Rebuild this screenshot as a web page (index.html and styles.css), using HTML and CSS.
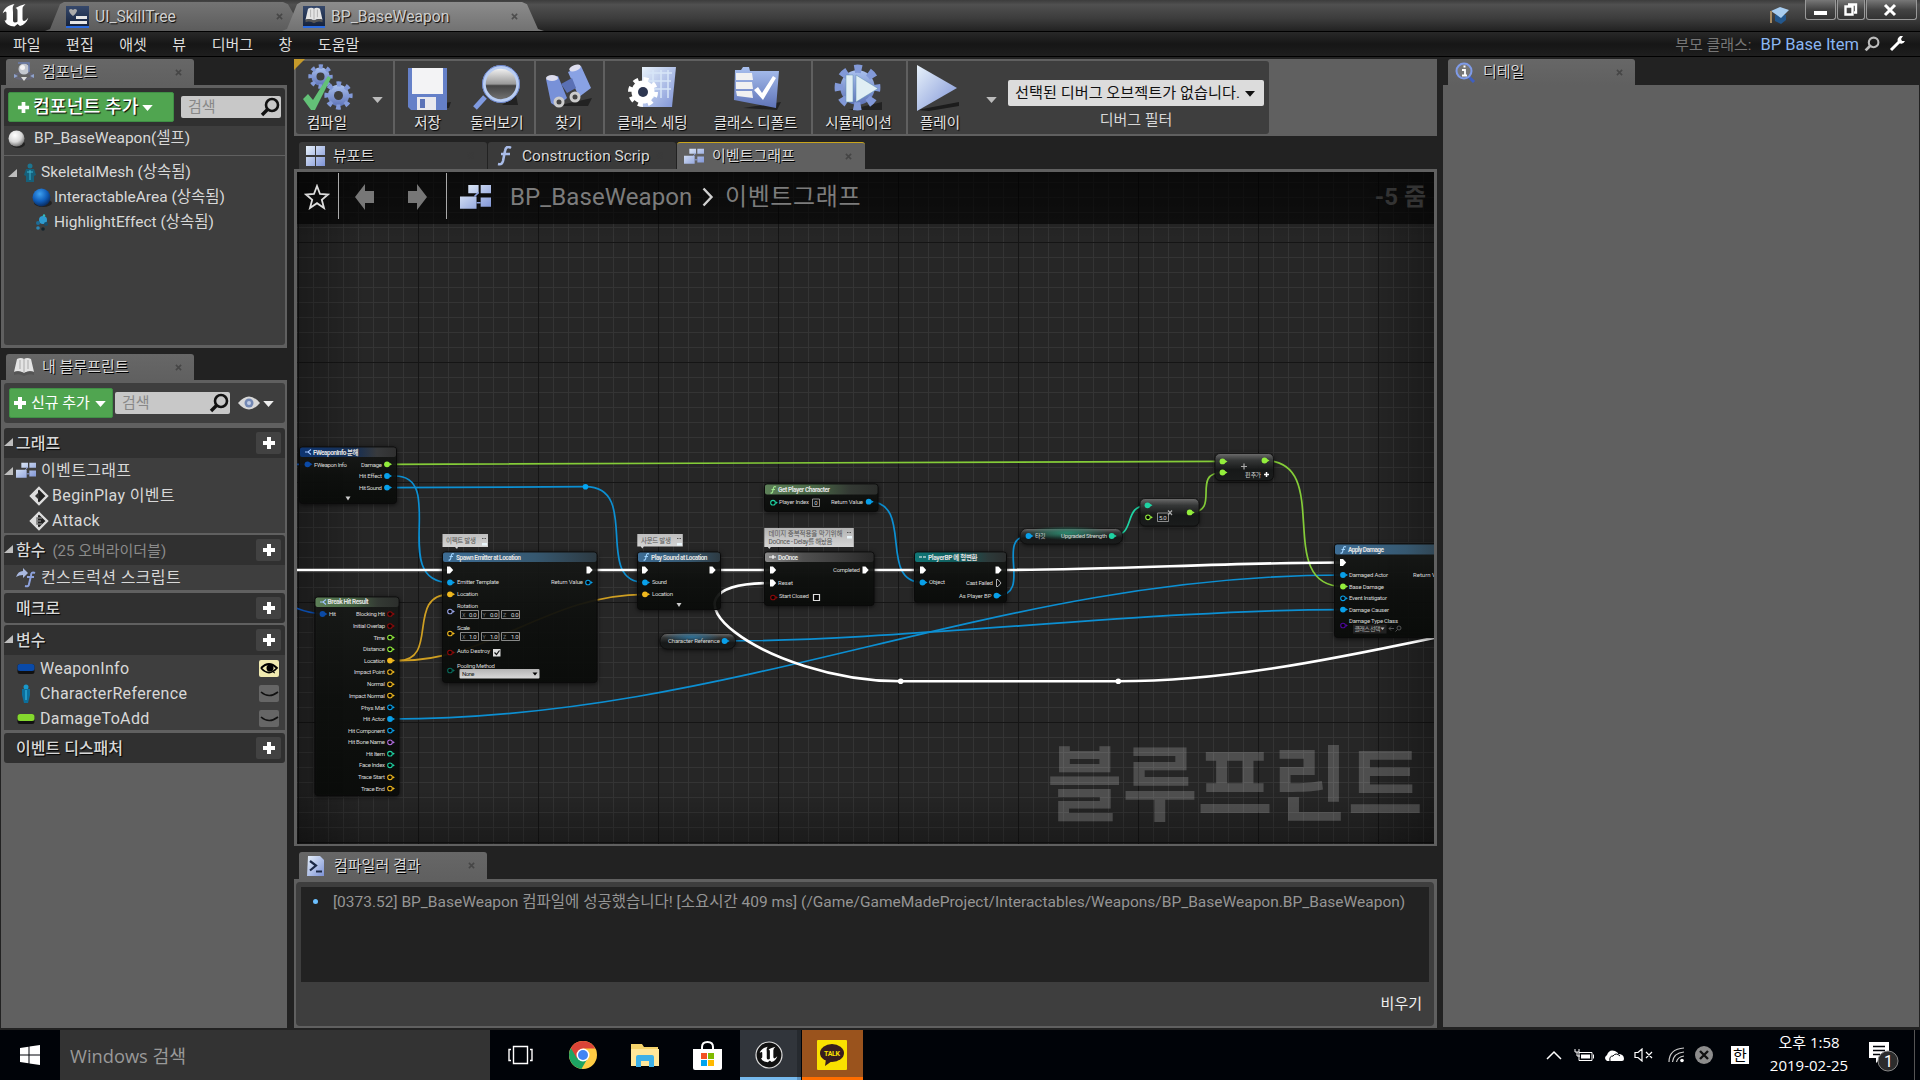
FILE: index.html
```html
<!DOCTYPE html>
<html lang="ko">
<head>
<meta charset="utf-8">
<title>BP_BaseWeapon</title>
<link rel="stylesheet" href="styles.css">
</head>
<body>
<svg class="defs" width="0" height="0" aria-hidden="true">
  <defs>
    <linearGradient id="ice" x1="0" y1="0" x2="1" y2="1"><stop offset="0" stop-color="#e8f2fb"/><stop offset="1" stop-color="#7e93d6"/></linearGradient>
    <linearGradient id="blu" x1="0" y1="0" x2="0" y2="1"><stop offset="0" stop-color="#a9c0ee"/><stop offset="1" stop-color="#5f74b8"/></linearGradient>
    <linearGradient id="deep" x1="0" y1="0" x2="0" y2="1"><stop offset="0" stop-color="#35486b"/><stop offset="1" stop-color="#16233d"/></linearGradient>
    <radialGradient id="ball" cx=".4" cy=".3" r=".7"><stop offset="0" stop-color="#fff"/><stop offset=".6" stop-color="#d8d8d8"/><stop offset="1" stop-color="#777"/></radialGradient>
    <radialGradient id="blueball" cx=".4" cy=".3" r=".7"><stop offset="0" stop-color="#3ea0f0"/><stop offset=".6" stop-color="#0f5cb8"/><stop offset="1" stop-color="#0a2c60"/></radialGradient>
    <linearGradient id="lens" x1="0" y1="0" x2="0" y2="1"><stop offset="0" stop-color="#fafafa"/><stop offset=".5" stop-color="#999"/><stop offset=".55" stop-color="#444"/><stop offset="1" stop-color="#777"/></linearGradient>
    <symbol id="i-x" viewBox="0 0 8 8"><path d="M1 1l6 6M7 1l-6 6" stroke="#3a3a3a" stroke-width="1.8"/></symbol>
    <symbol id="i-search" viewBox="0 0 20 20"><circle cx="12" cy="8" r="6" fill="none" stroke="currentColor" stroke-width="2.6"/><path d="M7.5 12.5L2 18" stroke="currentColor" stroke-width="3.4"/></symbol>
    <symbol id="i-plus" viewBox="0 0 14 14"><path d="M5 1h4v4h4v4h-4v4h-4v-4h-4v-4h4z" fill="#fff"/></symbol>
    <symbol id="i-down" viewBox="0 0 12 8"><path d="M0 1h12l-6 7z" fill="currentColor"/></symbol>
    <symbol id="i-exp" viewBox="0 0 10 10"><path d="M9 1v8h-9z" fill="#bdbdbd"/></symbol>
    <symbol id="i-graph" viewBox="0 0 30 24"><path d="M8 0h10v8h-10zM20 0h10v8h-10zM0 11h16v12h-16zM20 12h10v9h-10z" fill="url(#ice)"/><path d="M14 11l4-4M16 17h4" stroke="#8ea2dc" stroke-width="1.5"/></symbol>
    <symbol id="i-book" viewBox="0 0 22 20"><path d="M4 2q4-2 7 0q3-2 7 0l3 13q-5-2-10 1q-5-3-10-1z" fill="#e4e4e4"/><path d="M11 2v13M7 3v9M15 3v9" stroke="#aaa"/><path d="M1 15q5-2 10 1q5-3 10-1v3q-5-2-10 1q-5-3-10-1z" fill="#555"/></symbol>
    <symbol id="i-gear" viewBox="-12 -12 24 24"><circle r="8.800" fill="url(#blu)"/><circle r="9.600" fill="none" stroke="#8299d8" stroke-width="4.200" stroke-dasharray="3.770" stroke-dashoffset="1.885"/></symbol>
    <symbol id="i-ue" viewBox="0 0 26 24"><path d="M0 9.500C2 4 6 1 12 0C9.500 2.500 10.500 5 10.500 8v8.500q0 2 1.800 2t2.700-1V6.500q0-2.500-2-2.500q4-2.500 10-4q-3 2.500-3 5v10q0 2 1.500 2t4.500-3.500q-2.500 7-8.500 8.500l-2.500-2-3 2.500q-8-.5-10-6q2 .5 2-1.500V9q0-1.500-1-1.500t-3 2z" fill="currentColor"/></symbol>
    <g id="p-f"><circle r="2.900" fill="currentColor"/><path d="M2.500-1.500l2.500 1.500-2.500 1.500z" fill="currentColor"/></g>
    <g id="p-h"><circle r="2.300" fill="#050505" stroke="currentColor" stroke-width="1.100"/><path d="M2.700-1.400l2.200 1.400-2.200 1.400z" fill="currentColor"/></g>
    <g id="p-e"><path d="M-3-3.500h3l3.200 3.500-3.200 3.500h-3z" fill="#fff"/></g>
  </defs>
</svg>

<header class="titlebar">
  <svg class="ue" viewBox="0 0 26 24"><use href="#i-ue"/></svg>
  <div class="wintab first">
    <svg width="23" height="22" viewBox="0 0 23 22"><rect width="23" height="20" fill="url(#deep)"/><rect y="20" width="23" height="2" fill="#2b6be0"/><path d="M3 4q2-2 4 0q2-2 4 0q0 3-4 6q-4-3-4-6z" fill="#aaa"/><path d="M10 10h11v3h-11zM4 15h17v3h-17z" fill="#e6e6e6"/></svg>
    <span>UI_SkillTree</span><svg class="x" viewBox="0 0 8 8"><use href="#i-x"/></svg>
  </div>
  <div class="wintab on">
    <svg width="22" height="22" viewBox="0 0 22 22"><rect width="22" height="20" fill="url(#deep)"/><rect y="20" width="22" height="2" fill="#2b6be0"/><use href="#i-book" x="1" y="1" width="20" height="17"/></svg>
    <span>BP_BaseWeapon</span><svg class="x" viewBox="0 0 8 8"><use href="#i-x"/></svg>
  </div>
  <div class="wincontrols">
    <svg class="cap" width="20" height="19" viewBox="0 0 20 19"><path d="M5 9v6l6 3 5-4v-5z" fill="#23578c"/><path d="M1 5l9-4 9 3-8 8z" fill="#a8cdf0"/><path d="M1 5v12" stroke="#a58a62" stroke-width="2"/></svg>
    <div class="wb w31"><svg width="31" height="20"><path d="M9 11h13v4h-13z" fill="#fff"/></svg></div>
    <div class="wb w28"><svg width="28" height="20"><path d="M8.500 6.500h7v8h-7zM11 4.500h8v8h-2" fill="none" stroke="#fff" stroke-width="2.400"/></svg></div>
    <div class="wb w51"><svg width="51" height="20"><path d="M19 5l10 10M29 5l-10 10" stroke="#fff" stroke-width="3"/></svg></div>
  </div>
</header>

<nav class="menubar">
  <span>파일</span><span>편집</span><span>애셋</span><span>뷰</span><span>디버그</span><span>창</span><span>도움말</span>
  <div class="parent"><span class="dim">부모 클래스:</span><span class="link">BP Base Item</span>
    <svg width="16" height="16" viewBox="0 0 20 20"><use href="#i-search"/></svg>
    <svg class="wrench" width="17" height="16" viewBox="0 0 17 16"><path d="M2 14L10 6" stroke="#fff" stroke-width="3"/><path d="M10 1q-3 3 0 6q4 2 6-2l-3 0-1-2 2-3q-2-1-4 1z" fill="#fff"/></svg>
  </div>
</nav>

<main class="work">
  <aside class="left">
    <div class="tab"><svg width="22" height="20" viewBox="0 0 22 20"><ellipse cx="11" cy="14" rx="9" ry="3" fill="none" stroke="#667" stroke-width="2"/><circle cx="11" cy="7" r="5.500" fill="#c4c8d0"/><circle cx="9.500" cy="5.500" r="2.500" fill="#f4f4f4"/><path d="M5 1h11v9" fill="none" stroke="#6c7fae" stroke-width="1.500"/><path d="M8 15h6l-3 4z" fill="#ddd"/><path d="M1 12l4 2-4 2zM21 12l-4 2 4 2z" fill="#8ea2cc"/></svg><span>컴포넌트</span><svg class="x" viewBox="0 0 8 8"><use href="#i-x"/></svg></div>
    <section class="panel components">
      <div class="comphead">
        <button class="green big"><svg width="13" height="13"><use href="#i-plus"/></svg>컴포넌트 추가<svg class="dn" width="11" height="7"><use href="#i-down"/></svg></button>
        <div class="search"><span>검색</span><svg width="20" height="20"><use href="#i-search"/></svg></div>
      </div>
      <div class="self"><svg width="18" height="19" viewBox="0 0 18 19"><ellipse cx="10" cy="14" rx="7" ry="4" fill="#222"/><circle cx="8.500" cy="8.500" r="8" fill="url(#ball)"/></svg>BP_BaseWeapon(셀프)</div>
      <div class="tree">
        <div class="r"><svg class="e" width="10" height="10"><use href="#i-exp"/></svg><svg width="14" height="20" viewBox="0 0 14 20"><circle cx="7" cy="3" r="2.500" fill="#1d7590"/><path d="M3 6h8l2 6-2 1v6h-8v-6l-2-1z" fill="#16607a"/><path d="M7 7v10M4 9h6" stroke="#3bb2d0"/></svg><span>SkeletalMesh (상속됨)</span></div>
        <div class="r sub"><svg width="20" height="20" viewBox="0 0 20 20"><ellipse cx="11" cy="15" rx="9" ry="4" fill="#222"/><circle cx="9.500" cy="9.500" r="9" fill="url(#blueball)"/></svg><span>InteractableArea (상속됨)</span></div>
        <div class="r sub"><svg width="20" height="18" viewBox="0 0 20 18"><circle cx="11" cy="6" r="4" fill="#2f9bd0"/><circle cx="6" cy="9" r="2" fill="#1d6c96"/><circle cx="14" cy="10" r="2" fill="#174d6c"/><circle cx="6" cy="14" r="1.800" fill="#2b86b4"/><circle cx="11" cy="15" r="1.800" fill="#14232c"/><circle cx="12" cy="1.500" r="1.200" fill="#3bb"/></svg><span>HighlightEffect (상속됨)</span></div>
      </div>
    </section>
    <div class="tab second"><svg width="22" height="20"><use href="#i-book" width="22" height="20"/></svg><span>내 블루프린트</span><svg class="x" viewBox="0 0 8 8"><use href="#i-x"/></svg></div>
    <section class="panel blueprint">
      <div class="bphead">
        <button class="green"><svg width="14" height="14"><use href="#i-plus"/></svg>신규 추가<svg class="dn" width="11" height="7"><use href="#i-down"/></svg></button>
        <div class="search"><span>검색</span><svg width="20" height="20"><use href="#i-search"/></svg></div>
        <svg class="eye" width="22" height="14" viewBox="0 0 22 14"><path d="M0 7q11-13 22 0q-11 13-22 0z" fill="#d8d8d8"/><circle cx="11" cy="7" r="4.500" fill="#7388b4"/><circle cx="11" cy="7" r="2" fill="#c0cce4"/></svg><svg class="w" width="11" height="7"><use href="#i-down"/></svg>
      </div>
      <div class="cat"><svg class="e" width="10" height="10"><use href="#i-exp"/></svg><b>그래프</b><i><svg width="14" height="14"><use href="#i-plus"/></svg></i></div>
      <div class="items">
        <div class="r"><svg class="e" width="10" height="10"><use href="#i-exp"/></svg><svg class="g" width="20" height="17" viewBox="0 0 30 24"><use href="#i-graph"/></svg><span>이벤트그래프</span></div>
        <div class="r in"><svg width="20" height="20" viewBox="0 0 20 20"><path d="M10 2l8 8-8 8-8-8z" fill="#222" stroke="#ddd" stroke-width="2.400"/><path d="M9 2v16l-8-8z" fill="#ddd"/><path d="M10 6v8l-4-4z" fill="#333"/></svg><span>BeginPlay 이벤트</span></div>
        <div class="r in"><svg width="20" height="20" viewBox="0 0 20 20"><path d="M10 2l8 8-8 8-8-8z" fill="#222" stroke="#ddd" stroke-width="2.400"/><path d="M9 2v16l-8-8z" fill="#ddd"/><path d="M13 7h-5v6h5M8 10h4" fill="none" stroke="#777" stroke-width="1.500"/></svg><span>Attack</span></div>
      </div>
      <div class="cat"><svg class="e" width="10" height="10"><use href="#i-exp"/></svg><b>함수</b><small>(25 오버라이더블)</small><i><svg width="14" height="14"><use href="#i-plus"/></svg></i></div>
      <div class="items one"><div class="r fn"><svg width="20" height="20" viewBox="0 0 20 20"><path d="M0 9q2-6 7-6v-3l5 5-5 5v-3q-4 0-7 2z" fill="#a9b9e0"/><path d="M19 5q-4-2-4 3l-2 8q0 3-4 2M11 9h7" fill="none" stroke="#8ea2dc" stroke-width="2"/></svg><span>컨스트럭션 스크립트</span></div></div>
      <div class="cat macro"><b>매크로</b><i><svg width="14" height="14"><use href="#i-plus"/></svg></i></div>
      <div class="cat vars"><svg class="e" width="10" height="10"><use href="#i-exp"/></svg><b>변수</b><i><svg width="14" height="14"><use href="#i-plus"/></svg></i></div>
      <div class="items">
        <div class="r v"><svg width="18" height="12"><rect x=".5" y="1" width="17" height="10" rx="2.500" fill="#111"/><rect x=".5" y="1" width="17" height="7" rx="2.500" fill="#0a4aa8"/></svg><span>WeaponInfo</span><em class="open"><svg width="20" height="17" viewBox="0 0 20 17"><path d="M2 8q8-8 16 0q-8 9-16 0" fill="none" stroke="#000" stroke-width="1.800"/><circle cx="11" cy="8" r="3.500" fill="#000"/><path d="M14 12l2 1" stroke="#000"/></svg></em></div>
        <div class="r v"><svg width="18" height="20" viewBox="0 0 18 20"><circle cx="9" cy="3" r="2.500" fill="#1899cc"/><path d="M5 5h8v6l-2 8h-4l-2-8z" fill="#0c6f9c"/><path d="M9 6v10" stroke="#3bc5f0"/></svg><span>CharacterReference</span><em><svg width="20" height="17" viewBox="0 0 20 17"><path d="M2 7q8 7 17 0" fill="none" stroke="#111" stroke-width="1.600"/></svg></em></div>
        <div class="r v"><svg width="18" height="12"><rect x=".5" y="1" width="17" height="10" rx="2.500" fill="#111"/><rect x=".5" y="1" width="17" height="7" rx="2.500" fill="#84d82e"/></svg><span>DamageToAdd</span><em><svg width="20" height="17" viewBox="0 0 20 17"><path d="M2 7q8 7 17 0" fill="none" stroke="#111" stroke-width="1.600"/></svg></em></div>
      </div>
      <div class="cat macro disp"><b>이벤트 디스패처</b><i><svg width="14" height="14"><use href="#i-plus"/></svg></i></div>
    </section>
  </aside>

  <section class="center">
    <div class="toolbar"><div class="tools"><svg class="corner" width="11" height="11"><path d="M0 0h11L0 11z" fill="#c59a2a"/></svg>
      <div class="tool compile"><svg width="50" height="50" viewBox="0 0 50 50"><use href="#i-gear" x="5" y="0" width="25" height="25"/><circle cx="17.500" cy="12.500" r="4" fill="#3e3e3e"/><use href="#i-gear" x="21" y="17" width="29" height="29"/><circle cx="35.500" cy="31.500" r="4.500" fill="#3e3e3e"/><path d="M0 35l5-5 5 6L25 12l3 2L12 46H8z" fill="#63c177"/></svg><span>컴파일</span></div>
      <svg class="dd" width="11" height="7"><use href="#i-down"/></svg>
      <div class="tool save"><svg width="50" height="50" viewBox="0 0 50 50"><path d="M6 44h40l2-6z" fill="#222"/><path d="M5 4h39v42h-36l-3-3z" fill="#6580c8"/><path d="M9 4h31v26h-31z" fill="#f3f3f5"/><path d="M14 33h19v13h-19z" fill="#e8e8ee"/><path d="M17 35h5v9h-5z" fill="#5a72b8"/></svg><span>저장</span></div>
      <div class="tool browse"><svg width="50" height="50" viewBox="0 0 50 50"><path d="M13 33L3 44" stroke="#7f9ae0" stroke-width="5"/><path d="M30 41h16l-2-10z" fill="#222"/><circle cx="29" cy="20" r="17" fill="url(#lens)" stroke="#b9cdf2" stroke-width="3.500"/><circle cx="29" cy="20" r="18.500" fill="none" stroke="#6a84cc"/></svg><span>둘러보기</span></div>
      <div class="tool find"><svg width="50" height="50" viewBox="0 0 50 50"><path d="M12 42h32l4-8z" fill="#222"/><path d="M2 15l12-3 9 22-10 9-6-4z" fill="#7891d8"/><path d="M24 8l13-6 10 22-12 9z" fill="#89a2e4"/><path d="M17 20l11-6 4 10-9 5z" fill="#5a70b4"/><ellipse cx="8" cy="14" rx="6" ry="3" fill="#dde"/><ellipse cx="31" cy="4" rx="6" ry="3" transform="rotate(-20 31 4)" fill="#dde"/><circle cx="15" cy="38" r="5.500" fill="#ccc"/><circle cx="15" cy="38" r="2.500" fill="#444"/><circle cx="31" cy="33" r="5.500" fill="#ccc"/><circle cx="31" cy="33" r="2.500" fill="#444"/></svg><span>찾기</span></div>
      <div class="tool cset"><svg width="50" height="50" viewBox="0 0 50 50"><path d="M14 3h34l-4 40h-30z" fill="url(#ice)"/><path d="M18 9h26M18 17h25M18 25h25M25 6v28M33 6v28M40 6v28" stroke="#d7e6f8" stroke-width="1.500"/><circle cx="15" cy="28" r="11.500" fill="#fff"/><circle cx="15" cy="28" r="12.500" fill="none" stroke="#fff" stroke-width="5" stroke-dasharray="4.909"/><circle cx="15" cy="28" r="5" fill="#2d3650"/></svg><span>클래스 세팅</span></div>
      <div class="tool cdef"><svg width="50" height="50" viewBox="0 0 50 50"><path d="M12 44l34 2 4-8z" fill="#222"/><path d="M4 6h6l2-3h6l1 4h29l-3 37-42-8z" fill="url(#blu)"/><path d="M5 9h16l1 7h-17zM5 18h16l1 7h-17zM5 27h16l1 7-16-2z" fill="#f1f1f1"/><path d="M23 26l4-3 4 6 11-17 3 2-13 22z" fill="#fff"/></svg><span>클래스 디폴트</span></div>
      <div class="tool sim"><svg width="50" height="50" viewBox="0 0 50 50"><path d="M14 46h34v-8z" fill="#222"/><use href="#i-gear" x="0" y="0" width="47" height="47"/><path d="M12 11h7v27h-7zM22 11l22 13.500-22 13.500z" fill="#e0eef4" stroke="#5b8fb0" stroke-opacity=".5"/></svg><span>시뮬레이션</span></div>
      <div class="tool play"><svg width="50" height="50" viewBox="0 0 50 50"><path d="M5 46l42-8v4l-30 5z" fill="#1c1c1c"/><path d="M5 1l40 23-40 23z" fill="url(#ice)"/></svg><span>플레이</span></div>
      <svg class="dd d2" width="11" height="7"><use href="#i-down"/></svg>
      <div class="filter"><div class="combo"><span>선택된 디버그 오브젝트가 없습니다.</span><svg width="10" height="7"><use href="#i-down"/></svg></div><span>디버그 필터</span></div>
    </div></div>

    <div class="gtabs">
      <div class="gt"><svg width="19" height="20" viewBox="0 0 19 20"><path d="M0 0h9v9h-9zM10 0h9v9h-9zM0 11h9v9h-9zM10 11h9v9h-9z" fill="url(#ice)"/></svg><span>뷰포트</span><svg class="x" viewBox="0 0 8 8"><use href="#i-x"/></svg></div>
      <div class="gt"><svg width="19" height="20" viewBox="0 0 19 20"><path d="M16 2q-5-3-6 3l-2 10q-1 4-5 3M6 8h9" fill="none" stroke="#a9bce8" stroke-width="2.600"/></svg><span class="cs">Construction Scrip</span><svg class="x" viewBox="0 0 8 8"><use href="#i-x"/></svg></div>
      <div class="gt act"><svg width="20" height="17" viewBox="0 0 30 24"><use href="#i-graph"/></svg><span>이벤트그래프</span><svg class="x" viewBox="0 0 8 8"><use href="#i-x"/></svg></div>
    </div>

    <div class="graph">
      <svg class="canvas" width="1137" height="672" viewBox="297 172 1137 672">
        <defs>
          <pattern id="minor" x="298" y="242" width="15" height="15" patternUnits="userSpaceOnUse"><path d="M.5 0v15M0 .5h15" stroke="#343434"/></pattern>
          <pattern id="major" x="298" y="242" width="120" height="120" patternUnits="userSpaceOnUse"><path d="M.5 0v120M0 .5h120" stroke="#151515"/></pattern>
          <linearGradient id="vl"><stop offset="0" stop-opacity=".3"/><stop offset=".06" stop-opacity="0"/><stop offset=".94" stop-opacity="0"/><stop offset="1" stop-opacity=".3"/></linearGradient>
          <linearGradient id="vt" x2="0" y2="1"><stop offset="0" stop-opacity=".3"/><stop offset=".1" stop-opacity="0"/><stop offset=".92" stop-opacity="0"/><stop offset="1" stop-opacity=".3"/></linearGradient>
          <linearGradient id="body" x2="0" y2="1"><stop offset="0" stop-color="#1a1c1a"/><stop offset=".5" stop-color="#0f110f"/><stop offset="1" stop-color="#0a0c0a"/></linearGradient>
          <linearGradient id="hb"><stop offset="0" stop-color="#3d6d95"/><stop offset=".6" stop-color="#365870"/><stop offset="1" stop-color="#2d3a42"/></linearGradient>
          <linearGradient id="hn"><stop offset="0" stop-color="#0e3572"/><stop offset=".6" stop-color="#1a3050"/><stop offset=".8" stop-color="#383a3c"/><stop offset="1" stop-color="#303030"/></linearGradient>
          <linearGradient id="hg"><stop offset="0" stop-color="#5d8058"/><stop offset=".45" stop-color="#486645"/><stop offset=".75" stop-color="#343a34"/><stop offset="1" stop-color="#2c2e2c"/></linearGradient>
          <linearGradient id="hw"><stop offset="0" stop-color="#8a8a8a"/><stop offset=".35" stop-color="#505050"/><stop offset="1" stop-color="#2a2a2a"/></linearGradient>
          <linearGradient id="ht"><stop offset="0" stop-color="#0f7676"/><stop offset=".5" stop-color="#145a5a"/><stop offset=".8" stop-color="#2c3a3a"/><stop offset="1" stop-color="#2c2e2e"/></linearGradient>
          <linearGradient id="pill" x2="0" y2="1"><stop offset="0" stop-color="#777"/><stop offset=".25" stop-color="#3a3c3c"/><stop offset=".6" stop-color="#181a1a"/><stop offset="1" stop-color="#1c1e1e"/></linearGradient>
          <radialGradient id="gt"><stop offset="0" stop-color="#2a9c7c" stop-opacity=".8"/><stop offset="1" stop-color="#2a9c7c" stop-opacity="0"/></radialGradient>
          <radialGradient id="gb"><stop offset="0" stop-color="#2a7cac" stop-opacity=".8"/><stop offset="1" stop-color="#2a7cac" stop-opacity="0"/></radialGradient>
          <linearGradient id="bub" x2="0" y2="1"><stop offset="0" stop-color="#b4b4b4"/><stop offset="1" stop-color="#d8d8d8"/></linearGradient>
        </defs>
        <rect x="297" y="172" width="1137" height="672" fill="#262626"/>
        <rect x="297" y="172" width="1137" height="672" fill="url(#minor)"/>
        <rect x="297" y="172" width="1137" height="672" fill="url(#major)"/>
        <rect x="297" y="172" width="1137" height="672" fill="url(#vl)"/>
        <rect x="297" y="172" width="1137" height="672" fill="url(#vt)"/>
        <text class="mark" x="1047" y="814" textLength="376">블루프린트</text>

        <g class="wires">
          <g class="c-nv"><path d="M296 464.300h11M296 608q12 5 27 6"/></g>
          <g class="c-bl">
            <path d="M387 476h8C448 476 388 582.500 450 582.500"/>
            <path d="M387 487.600L585.500 486.700C642 487 592 582.500 645 582.500"/>
            <path d="M390 719C740 719 993 575 1343 575"/>
            <path d="M724.600 641C900 641 1150 609.600 1343 609.600"/>
            <path d="M868.700 501.700C915 501.700 877 582.500 922.500 582.500"/>
            <path d="M996.500 595.600C1034 595.600 994 536 1028.500 536"/>
          </g>
          <g class="c-ye"><path d="M390 660.600h8C440 660.600 405 594.300 450 594.300"/><path d="M390 660.600h10C490 660.600 548 594.300 645 594.300"/></g>
          <g class="c-te"><path d="M1112 536C1137 536 1122 505.300 1147.500 505.300"/></g>
          <g class="c-gr"><path d="M387 464.300L1222 461.400M1190 512.400C1222 512.400 1190 472.500 1222.500 472.500M1264.500 460.500C1335 460.500 1272 586.500 1343 586.500"/></g>
          <g class="c-wh"><path d="M296 570h153M590 570h55M712 570h60M866 570h56M999 570C1110 570 1230 562.500 1342 562.500"/><path d="M772 583C637 583 765 681.300 900.700 681.300H1118.300C1220 681.300 1320 662 1436 637.500"/></g>
        </g>
        <circle cx="585.500" cy="486.700" r="2.800" fill="#04a6f4"/><circle cx="900.700" cy="681.300" r="2.800" fill="#fff"/><circle cx="1118.300" cy="681.300" r="2.800" fill="#fff"/>

        <g class="box">
          <rect x="299.500" y="447" width="97" height="56.500" rx="3"/><rect x="442.500" y="552" width="154.500" height="130.500" rx="3"/><rect x="315" y="597" width="84" height="198.500" rx="3"/><rect x="637.500" y="552" width="83" height="57.500" rx="3"/><rect x="764.500" y="484" width="113.500" height="27.500" rx="3"/><rect x="764.500" y="552" width="109.500" height="53.500" rx="3"/><rect x="914.500" y="552" width="92" height="50.500" rx="3"/><rect x="1334.500" y="544" width="120" height="93.500" rx="3"/>
        </g>
        <g class="head">
          <rect x="300" y="447.500" width="96" height="9.500" rx="2" fill="url(#hn)"/><rect x="443" y="552.500" width="153.500" height="9.500" rx="2" fill="url(#hb)"/><rect x="315.500" y="597.500" width="83" height="9.500" rx="2" fill="url(#hg)"/><rect x="638" y="552.500" width="82" height="9.500" rx="2" fill="url(#hb)"/><rect x="765" y="484.500" width="112.500" height="10" rx="2" fill="url(#hg)"/><rect x="765" y="552.500" width="108.500" height="9.500" rx="2" fill="url(#hw)"/><rect x="915" y="552.500" width="91" height="9.500" rx="2" fill="url(#ht)"/><rect x="1335" y="544.500" width="119" height="10" rx="2" fill="url(#hb)"/>
        </g>
        <g class="pills">
          <rect x="660" y="633.500" width="75.500" height="15.500" rx="7"/><rect x="1020" y="528.500" width="102.500" height="15.500" rx="7"/><rect x="1140" y="498.500" width="59" height="27.500" rx="5"/><rect x="1215" y="453.500" width="58.500" height="27" rx="5"/>
        </g>
        <ellipse cx="692" cy="637" rx="28" ry="5" fill="url(#gb)"/><ellipse cx="1067" cy="533" rx="42" ry="7" fill="url(#gt)"/>

        <g class="title">
          <text x="313" y="454.700" textLength="45.500">FWeaponInfo 분해</text><text x="456" y="559.500" textLength="65">Spawn Emitter at Location</text><text x="327.500" y="604.300" textLength="41">Break Hit Result</text><text x="651" y="559.500" textLength="56.500">Play Sound at Location</text><text x="778" y="492.300" textLength="52">Get Player Character</text><text x="778" y="559.500" textLength="20">DoOnce</text><text x="928" y="559.500" textLength="49.500">PlayerBP 에 형변환</text><text x="1348" y="552.300" textLength="36">Apply Damage</text>
        </g>
        <g class="fi"><path d="M454 554q-2-1-2.500 1l-1 4q-.5 1.500-2 1M449.500 556.500h3.500M649 554q-2-1-2.500 1l-1 4q-.5 1.500-2 1M644.500 556.500h3.500M1346 547q-2-1-2.500 1l-1 4q-.5 1.500-2 1M1341.500 549.500h3.500" stroke="#9fd4ff"/><path d="M776 487q-2-1-2.500 1l-1 4q-.5 1.500-2 1M771.500 489.500h3.500" stroke="#9fe88f"/><path d="M305 452h3l3-2.500M308 452l3 2.500M320 602h3l3-2.500M323 602l3 2.500" stroke="#9fc4ff"/><path d="M769 557h7M773 555v4M919 557h3M923 557h3" stroke="#fff"/></g>

        <g class="pins c-nv"><use href="#p-f" x="302.500" y="460.300"/><use href="#p-f" x="317.500" y="610"/></g>
        <g class="pins c-bl">
          <use href="#p-f" x="382" y="472"/><use href="#p-f" x="382" y="483.600"/><use href="#p-f" x="445" y="578.500"/><use href="#p-h" x="583" y="578.500"/><use href="#p-h" x="385" y="703.300"/><use href="#p-f" x="385" y="715"/><use href="#p-h" x="385" y="726.600"/><use href="#p-f" x="640" y="578.500"/><use href="#p-f" x="863.700" y="497.700"/><use href="#p-f" x="917.500" y="578.500"/><use href="#p-f" x="991.500" y="591.600"/><use href="#p-f" x="719.600" y="637"/><use href="#p-f" x="1023.500" y="532"/><use href="#p-f" x="1338" y="571"/><use href="#p-h" x="1338" y="594.300"/><use href="#p-f" x="1338" y="605.600"/>
        </g>
        <g class="pins c-gr"><use href="#p-f" x="382" y="460.300"/><use href="#p-h" x="385" y="633.500"/><use href="#p-h" x="385" y="645.300"/><use href="#p-h" x="1143" y="513.300"/><use href="#p-f" x="1184.700" y="508.400"/><use href="#p-f" x="1217.500" y="457.400"/><use href="#p-f" x="1217.500" y="468.500"/><use href="#p-f" x="1259.500" y="456.500"/><use href="#p-f" x="1338" y="582.500"/></g>
        <g class="pins c-ye"><use href="#p-f" x="445" y="590.300"/><use href="#p-h" x="445" y="629.500"/><use href="#p-f" x="385" y="656.600"/><use href="#p-h" x="385" y="668"/><use href="#p-h" x="385" y="680.300"/><use href="#p-h" x="385" y="691.600"/><use href="#p-h" x="385" y="773.300"/><use href="#p-h" x="385" y="784.500"/><use href="#p-f" x="640" y="590.300"/></g>
        <g class="pins c-te"><use href="#p-h" x="385" y="749.700"/><use href="#p-h" x="385" y="761.300"/><use href="#p-h" x="768" y="498.700"/><use href="#p-f" x="1106.700" y="532"/><use href="#p-f" x="1142.500" y="501.300"/></g>
        <g class="pins c-rd"><use href="#p-h" x="385" y="610"/><use href="#p-h" x="385" y="622"/><use href="#p-h" x="445" y="648.500"/><use href="#p-h" x="768" y="593.500"/></g>
        <g class="pins c-pu"><use href="#p-h" x="385" y="738.300"/></g><g class="pins c-vi"><use href="#p-h" x="1338" y="621.500"/></g><g class="pins c-la"><use href="#p-h" x="445" y="607.500"/></g><g class="pins c-dt"><use href="#p-h" x="445" y="666.500"/></g>
        <g class="ex"><use href="#p-e" x="446" y="566"/><use href="#p-e" x="585.500" y="566"/><use href="#p-e" x="641" y="566"/><use href="#p-e" x="708.500" y="566"/><use href="#p-e" x="769" y="566"/><use href="#p-e" x="769" y="579"/><use href="#p-e" x="861.500" y="566"/><use href="#p-e" x="919" y="566"/><use href="#p-e" x="994.500" y="566"/><use href="#p-e" x="1339" y="558.500"/></g>
        <path d="M996.500 579.500h1.500l3 3.500-3 3.500h-1.500z" fill="#0a0a0a" stroke="#ddd" stroke-width=".8"/>

        <g class="lb">
          <text x="314" y="466.500" textLength="33">FWeapon Info</text><text x="361" y="466.500" textLength="21">Damage</text><text x="359" y="478.200" textLength="23">Hit Effect</text><text x="359" y="489.800" textLength="23">Hit Sound</text>
          <text x="457" y="584.200" textLength="42">Emitter Template</text><text x="551" y="584.200" textLength="32">Return Value</text><text x="457" y="596" textLength="21">Location</text><text x="457" y="608.200" textLength="21">Rotation</text><text x="457" y="630.200" textLength="13">Scale</text><text x="457" y="653.400" textLength="33">Auto Destroy</text><text x="457" y="668" textLength="38">Pooling Method</text>
          <text x="329" y="616.200" textLength="7">Hit</text>
          <text x="356" y="616.200" textLength="29">Blocking Hit</text><text x="353" y="628.200" textLength="32">Initial Overlap</text><text x="373.500" y="639.700" textLength="11.500">Time</text><text x="363" y="651.300" textLength="22">Distance</text><text x="364" y="662.800" textLength="21">Location</text><text x="354" y="674.200" textLength="31">Impact Point</text><text x="367" y="686.300" textLength="18">Normal</text><text x="349" y="697.800" textLength="36">Impact Normal</text><text x="361" y="709.500" textLength="24">Phys Mat</text><text x="363" y="721.200" textLength="22">Hit Actor</text><text x="348" y="732.800" textLength="37">Hit Component</text><text x="348" y="744.300" textLength="37">Hit Bone Name</text><text x="366" y="756" textLength="19">Hit Item</text><text x="359" y="767.300" textLength="26">Face Index</text><text x="358" y="779.300" textLength="27">Trace Start</text><text x="361" y="790.800" textLength="24">Trace End</text>
          <text x="652" y="584.200" textLength="15">Sound</text><text x="652" y="596.200" textLength="21">Location</text>
          <text x="779" y="504" textLength="30">Player Index</text><text x="831" y="504" textLength="32">Return Value</text><text x="814.200" y="505">0</text>
          <text x="833" y="572" textLength="27">Completed</text><text x="778" y="585" textLength="15">Reset</text><text x="779" y="598" textLength="30">Start Closed</text>
          <text x="929" y="584.200" textLength="16">Object</text><text x="966" y="585" textLength="27">Cast Failed</text><text x="959" y="598" textLength="32.500">As Player BP</text>
          <text x="668" y="643" textLength="52">Character Reference</text><text x="1035" y="538.200" textLength="10.500">타깃</text><text x="1061" y="538.200" textLength="46">Upgraded Strength</text>
          <text x="1159" y="519.500" textLength="7.500">5.0</text><text x="1245" y="477" textLength="16">핀 추가</text>
          <text x="1349" y="577" textLength="39">Damaged Actor</text><text x="1413" y="577">Return V</text><text x="1349" y="588.700" textLength="35">Base Damage</text><text x="1349" y="600.300" textLength="38">Event Instigator</text><text x="1349" y="611.800" textLength="40">Damage Causer</text><text x="1349" y="623" textLength="49">Damage Type Class</text>
          <text x="469" y="616.700" textLength="7.500">0.0</text><text x="490" y="616.700" textLength="7.500">0.0</text><text x="511" y="616.700" textLength="7.500">0.0</text><text x="469" y="638.700" textLength="7.500">1.0</text><text x="490" y="638.700" textLength="7.500">1.0</text><text x="511" y="638.700" textLength="7.500">1.0</text>
        </g>
        <g class="axis"><text x="462" y="616.700">X</text><text x="482.500" y="616.700">Y</text><text x="503" y="616.700">Z</text><text x="462" y="638.700">X</text><text x="482.500" y="638.700">Y</text><text x="503" y="638.700">Z</text></g>
        <g class="inp"><path d="M460.500 610.500h18v8h-18zM481.500 610.500h17.500v8h-17.500zM501.500 610.500h18v8h-18zM460.500 632.500h18v8h-18zM481.500 632.500h17.500v8h-17.500zM501.500 632.500h18v8h-18zM812.500 499h7v7.500h-7zM1157.500 513h11v8.500h-11z"/></g>
        <path d="M813.500 594.500h6v6h-6z" fill="#050505" stroke="#ddd" stroke-width="1.200"/>
        <rect x="493" y="649" width="7.500" height="7.500" fill="#ddd"/><path d="M494.500 652.500l2 2 3-4" fill="none" stroke="#111" stroke-width="1.200"/>
        <rect x="459.500" y="669" width="80" height="9.500" rx="1" fill="url(#bub)"/><text class="dk" x="462" y="676" textLength="12.500">None</text><path d="M532.500 672.500h5l-2.500 3z" fill="#000"/>
        <path d="M345.500 496.500h5l-2.500 4zM676.500 603h5l-2.500 4z" fill="#ccc"/>
        <rect x="1353" y="624.500" width="33.500" height="9" fill="#222"/><text class="sel" x="1354.500" y="631" textLength="26">클래스 선택</text><path d="M1380.500 627.500h4l-2 2.500z" fill="#bbb"/><path d="M1389 628.500h5M1391 626.500l-2 2 2 2" fill="none" stroke="#555"/><circle cx="1399" cy="628" r="2" fill="none" stroke="#555"/><path d="M1397.500 629.500l-2 2" stroke="#555"/>
        <path d="M1244 463.500v6M1241 466.500h6M1168 510.500l4 4.500M1172 510.500l-4 4.500" stroke="#aaa" stroke-width="1.200"/><path d="M1266.500 472v5M1264 474.500h5" stroke="#fff" stroke-width="1.500"/>
        <g class="bubble">
          <path d="M442.500 534h45.500v13h-30l-1 2-2-2h-12.500zM637.300 534h45.500v12.500h-39l-1.500 2-1.500-2h-3.500zM764.300 528h89.500v19h-83l-1.500 2-1.500-2h-3.500z"/>
          <text x="446" y="543" textLength="30">이펙트 발생</text><text x="641" y="543" textLength="30">사운드 발생</text><text x="768.500" y="536" textLength="74">데미지 중복적용을 막기위해</text><text x="768.500" y="543.500" textLength="64">DoOnce - Delay를 해놨음</text>
        </g>
        <path d="M482 538.500h5M677 538.500h5M847 532.500h5" stroke="#555" stroke-dasharray="1.500 1"/><path d="M482 543h5v2.500h-5zM677 543h5v2.500h-5zM847 536h5v2.500h-5z" fill="#e9f5fa"/>
      </svg>
      <div class="crumbs">
        <svg width="26" height="26" viewBox="0 0 26 26"><path d="M13 2l3 8 8 .5-6.200 5.200 2.200 8.300-7-4.800-7 4.800 2.200-8.300-6.200-5.200 8-.5z" fill="none" stroke="#ddd" stroke-width="1.800"/></svg>
        <u></u>
        <svg class="ar" width="22" height="28" viewBox="0 0 22 28"><path d="M1 14L11 1v7h9v12h-9v7z" fill="#777"/></svg>
        <svg class="ar2" width="22" height="28" viewBox="0 0 22 28"><path d="M21 14L11 1v7h-9v12h9v7z" fill="#777"/></svg>
        <u class="u2"></u>
        <svg class="gi" width="31" height="25" viewBox="0 0 30 24"><use href="#i-graph"/></svg>
        <span class="bp">BP_BaseWeapon</span>
        <svg class="ch" width="12" height="20" viewBox="0 0 12 20"><path d="M1.500 1.500l8 8.500-8 8.500" fill="none" stroke="#d0d0d0" stroke-width="2.400"/></svg>
        <span class="eg">이벤트그래프</span>
        <span class="zoom">-5 줌</span>
      </div>
    </div>

    <div class="tab res"><svg width="19" height="20" viewBox="0 0 19 20"><path d="M2 0h12l4 4v16h-17z" fill="url(#ice)"/><path d="M4 5l6 4.500-6 5M10 15.500h6" fill="none" stroke="#1d2a48" stroke-width="2.200"/></svg><span>컴파일러 결과</span><svg class="x" viewBox="0 0 8 8"><use href="#i-x"/></svg></div>
    <div class="results"><div class="rin">
      <div class="log"><span class="dot"></span><span class="msg">[0373.52] BP_BaseWeapon 컴파일에 성공했습니다! [소요시간 409 ms] (/Game/GameMadeProject/Interactables/Weapons/BP_BaseWeapon.BP_BaseWeapon)</span></div>
      <div class="clear">비우기</div>
    </div></div>
  </section>

  <aside class="right">
    <div class="tab det"><svg width="21" height="21" viewBox="0 0 21 21"><path d="M13 14l6 6" stroke="#3f5fc0" stroke-width="3"/><circle cx="9" cy="9" r="7.500" fill="#777" stroke="#7f9be8" stroke-width="2"/><path d="M7 8h3v5M7 13.500h5M8.500 4.500h2" stroke="#fff" stroke-width="1.800" fill="none"/></svg><span>디테일</span><svg class="x" viewBox="0 0 8 8"><use href="#i-x"/></svg></div>
    <div class="details"></div>
  </aside>
</main>

<footer class="taskbar">
  <div class="start"><svg width="20" height="20" viewBox="0 0 20 20"><path d="M0 3l8.500-1.200v7.700h-8.500zM9.500 1.600L20 0v9.500h-10.500zM0 10.500h8.500v7.700l-8.500-1.200zM9.500 10.500h10.500v9.500l-10.500-1.600z" fill="#fff"/></svg></div>
  <div class="wsearch">Windows 검색</div>
  <div class="app tv"><svg width="25" height="20" viewBox="0 0 25 20"><path d="M5.500 1.500h14v17h-14zM3 4.500h-2v11h2M22 4.500h2v11h-2" fill="none" stroke="#fff" stroke-width="1.400"/></svg></div>
  <div class="app"><svg width="28" height="28" viewBox="0 0 28 28"><circle cx="14" cy="14" r="14" fill="#fc4"/><path d="M1.900 7a14 14 0 0 0 10.500 20.900l7-11.900-5.400-2z" fill="#1da462"/><path d="M14 7.500h12.300A14 14 0 0 0 1.900 7L8 17.500z" fill="#db4437"/><circle cx="14" cy="14" r="6.500" fill="#fff"/><circle cx="14" cy="14" r="5" fill="#4285f4"/></svg></div>
  <div class="app"><svg width="28" height="24" viewBox="0 0 28 24"><path d="M0 1h11l2 3h14v18h-27z" fill="#f5d36b"/><path d="M0 6h28v17h-28z" fill="#ffe79a"/><path d="M5 24v-10q0-2 2-2h14q2 0 2 2v10h-5v-6h-8v6z" fill="#3db0e8"/></svg></div>
  <div class="app"><svg width="29" height="29" viewBox="0 0 29 29"><path d="M9 9v-3q0-5 5.500-5t5.500 5v3" fill="none" stroke="#fff" stroke-width="2"/><path d="M0 8h29v19q0 2-2 2h-25q-2 0-2-2z" fill="#fff"/><path d="M8 12h6v6h-6z" fill="#f25022"/><path d="M15 12h6v6h-6z" fill="#7fba00"/><path d="M8 19h6v6h-6z" fill="#00a4ef"/><path d="M15 19h6v6h-6z" fill="#ffb900"/></svg></div>
  <div class="app uea"><svg width="28" height="28" viewBox="0 0 28 28"><circle cx="14" cy="14" r="13" fill="#111" stroke="#ddd" stroke-width="1.200"/><g color="#fff"><use href="#i-ue" x="4.500" y="5" width="18" height="18"/></g></svg></div>
  <div class="stack"></div>
  <div class="app kakao"><svg width="30" height="30" viewBox="0 0 30 30"><rect width="30" height="30" rx="1" fill="#fae100"/><ellipse cx="15" cy="13" rx="12" ry="9" fill="#371d1e"/><path d="M9 19l-1 7 7-5z" fill="#371d1e"/><text x="7" y="16" class="talk" textLength="16">TALK</text></svg></div>
  <div class="tray">
    <svg width="18" height="12" viewBox="0 0 18 12"><path d="M2 10l7-7 7 7" fill="none" stroke="#fff" stroke-width="1.500"/></svg>
    <svg class="bat" width="21" height="14" viewBox="0 0 21 14"><path d="M5 4.500h13v8h-13zM19.500 6.500v4M1 1v3h4v-3M3 4v4h3" fill="none" stroke="#fff"/><path d="M7 6.500h9v4h-9z" fill="#fff"/></svg>
    <svg width="21" height="13" viewBox="0 0 21 13"><path d="M3 12q-4-3 0-6q2-6 8-4q4 2 3 3q6 0 6 5q0 2-2 2z" fill="#fff"/><path d="M6 12q-1-5 3-5q3-4 7 0" fill="none" stroke="#000308"/></svg>
    <svg width="20" height="14" viewBox="0 0 20 14"><path d="M1 4.500h3l4-3.500v12l-4-3.500h-3zM12 4l6 6M18 4l-6 6" fill="none" stroke="#fff" stroke-width="1.200"/></svg>
    <svg width="17" height="16" viewBox="0 0 17 16"><path d="M1 15q0-13 15-14M4.500 15q1-9 11.500-10M8.500 15q1-5 7.500-6" fill="none" stroke="#ccc" stroke-width="1.200"/><circle cx="14" cy="13.500" r="1.800" fill="#fff"/></svg>
    <svg width="18" height="18" viewBox="0 0 18 18"><circle cx="9" cy="9" r="9" fill="#8d8d8d"/><path d="M5 5l8 8M13 5l-8 8" stroke="#111" stroke-width="2.400"/></svg>
    <span class="han">한</span>
    <div class="clock"><span>오후 1:58</span><span>2019-02-25</span></div>
    <svg class="noti" width="32" height="32" viewBox="0 0 32 32"><path d="M1 2h20v16h-8l-5 5v-5h-7z" fill="#fff"/><path d="M5 6.500h12M5 10.500h12M5 14.500h7" stroke="#000308" stroke-width="1.300"/><circle cx="20" cy="21" r="10" fill="#2c2c2c" stroke="#888"/><text x="16" y="26.500" class="one1">1</text></svg>
    <s></s>
  </div>
</footer>
</body>
</html>
```
FILE: styles.css
```css
*{box-sizing:border-box}
body{margin:0;width:1920px;height:1080px;overflow:hidden;background:#222;color:#d8d8d8;font:16px/1 Roboto,"Noto Sans CJK KR",sans-serif;display:flex;flex-direction:column}
svg{display:block;flex:none}
.defs{position:absolute;width:0;height:0}
span,b,small{white-space:nowrap}

.titlebar{height:32px;flex:none;display:flex;background:linear-gradient(#3c3c3c,#505050 15%,#3c3c3c 60%,#222);border-bottom:1px solid #000}
.ue{width:27px;height:24px;margin:4px 0 0 2px;color:#fff}
.wintab{display:flex;align-items:center;height:29px;margin-top:2px;background:linear-gradient(#747474,#5c5c5c);color:#d0d0d0;text-shadow:1px 1px 1px #000}
.wintab.first{width:250px;margin-left:16px;padding-left:21px;clip-path:polygon(0 100%,5px 93%,15px 8%,19px 0,238px 0,243px 8%,250px 50%,250px 100%)}
.wintab.on{width:262px;margin-left:-13px;padding-left:21px;background:linear-gradient(#8c8c8c,#727272);clip-path:polygon(0 100%,5px 93%,15px 8%,19px 0,240px 0,245px 8%,256px 93%,262px 100%)}
.wintab span{margin:1px 0 0 6px;font-size:15.700px;flex:1}
.x{width:7px;height:7px;opacity:.7}
.wintab.first .x{margin-right:12px}
.wintab.on .x{margin-right:26px}
.wincontrols{margin-left:auto;display:flex;gap:1px;padding-right:3px}
.cap{margin:6px 14px 0 0}
.wb{height:20px;background:linear-gradient(#777,#444 50%,#333);border:1px solid #999;border-top:0;border-radius:0 0 3px 3px;overflow:hidden;display:flex;justify-content:center}
.w31{width:31px}.w28{width:28px}.w51{width:51px}

.menubar{height:25px;flex:none;display:flex;align-items:center;gap:25.500px;padding:2px 0 0 13px;background:linear-gradient(#282828,#161616 50%,#1e1e1e);border-bottom:1px solid #000;font-size:15px;color:#ddd}
.parent{margin-left:auto;display:flex;align-items:center;padding-right:14px}
.dim{color:#767676}
.link{color:#8ab6f2;margin:0 5px 0 9px;font-size:16.500px}
.parent svg{color:#bbb;margin-top:-3px}
.parent .wrench{margin-left:9px}

.work{display:flex;height:973px;flex:none;padding:2px 1px 0}
.left{width:286px;display:flex;flex-direction:column}
.tab{width:188px;height:26px;margin-left:5px;display:flex;align-items:center;background:linear-gradient(#676767,#606060);border-radius:3px 3px 0 0;padding:0 12px 0 7px;font-size:15px;text-shadow:1px 1px 0 #000;flex:none}
.tab span{margin:1px 0 0 7px;flex:1}
.panel{background:#606060;padding:3px 2px 3px 3px;display:flex;flex-direction:column}
.components{height:263px}
.comphead{height:38px;flex:none;background:#303030;border-radius:3px 3px 0 0;display:flex;align-items:center;padding-left:4px}
.green{height:30px;width:104px;background:#50a550;border:1px solid #3f8f45;border-radius:2px;color:#fff;font:15px/1 Roboto,"Noto Sans CJK KR",sans-serif;display:flex;align-items:center;padding:0 0 0 3px;gap:4px;white-space:nowrap}
.green.big{width:166px;font-size:18.300px;font-weight:500;padding-left:8px;text-shadow:1px 1px 1px #000;gap:3px}
.green .dn{color:#fff;margin-left:1px}
.search{width:100px;height:22px;margin-left:7px;background:#c8c8c8;border-radius:2px;display:flex;align-items:center;justify-content:space-between;padding:0 1px 0 7px;color:#888;font-size:15px}
.search svg{color:#111}
.self{height:29px;flex:none;background:#3e3e3e;display:flex;align-items:center;gap:8px;padding:0 0 3px 4px;font-size:15.500px}
.tree{flex:1;background:#3e3e3e;border-radius:0 0 3px 3px;display:flex;flex-direction:column;padding-top:4px;border-top:1px solid #606060;font-size:15.500px}
.r{height:25px;display:flex;align-items:center;flex:none}
.tree .r{padding-left:4px}
.tree .e{margin-right:5px}
.tree .r span{margin-left:4px}
.tree .sub{padding-left:28px}
.tree .sub span{margin-left:2px}
.second{margin-top:6px}
.blueprint{height:648px}
.bphead{height:40px;flex:none;background:#3e3e3e;border-radius:3px;display:flex;align-items:center;padding-left:5px;margin-bottom:5px}
.bphead .search{width:115px;margin-left:2px}
.eye{margin-left:8px}
.w{color:#eee;margin-left:3px}
.cat{height:30px;flex:none;background:#303030;display:flex;align-items:center;border-radius:3px 3px 0 0;padding-right:4px}
.cat .e{margin:0 2px 3px 0}
.cat b{font-size:16px;font-weight:500;text-shadow:1px 1px 1px #000;margin-top:1px}
.cat small{font-size:15px;color:#8b8b8b;margin:3px 0 0 7px}
.cat i{margin-left:auto;width:25px;height:22px;background:#424242;border-radius:2px;display:flex;align-items:center;justify-content:center}
.macro{padding-left:12px;border-radius:3px;margin-bottom:2px}
.items{background:#3e3e3e;flex:none;height:75px;margin-bottom:2px;font-size:16px;letter-spacing:.35px}
.items.one{height:25px;margin-bottom:3px}
.items:nth-last-of-type(2){margin-bottom:3px}
.items .g{margin:0 5px 0 2px}
.items .in{padding-left:25px;gap:3px}
.items .fn{padding-left:12px;gap:5px}
.items .v{padding:2px 6px 0 13px;gap:5px}
.r em{margin-left:auto;width:20px;height:17px;background:#666;border-radius:2px}
.r em.open{background:#f0eab0}

.center{width:1143px;margin-left:7px;display:flex;flex-direction:column}
.toolbar{height:77px;flex:none;background:#606060;padding:2px 0 2px 2px}
.tools{width:973px;height:73px;background:#3e3e3e;border-radius:3px;display:flex;position:relative}
.corner{position:absolute;left:-2px;top:-2px}
.tool{display:flex;flex-direction:column;align-items:center;font-size:14.500px;color:#e4e4e4;text-shadow:1px 1px 1px #000;padding:3px 2px 0 0;height:73px}
.tool span{margin-top:3px}
.compile{width:66px;padding-right:4px}
.compile svg{margin-left:2px}
.dd{color:#bbb;margin:35px 10px 0 10px}
.save{width:69px;border-left:2px solid #606060}
.browse{width:72px}
.find{width:69px;border-left:2px solid #606060}
.cset{width:99px;border-left:2px solid #606060}
.cdef{width:109px}
.sim{width:95px;border-left:2px solid #606060}
.play{width:62px;border-left:2px solid #606060;padding-right:0}
.play svg{margin-left:-3px}
.play span{margin-left:4px}
.d2{margin-left:18px}
.filter{display:flex;flex-direction:column;align-items:center;padding-top:19px;gap:7px;font-size:15px;margin-left:1px}
.combo{width:256px;height:26px;background:#dcdcdc;color:#111;display:flex;align-items:center;justify-content:space-between;padding:1px 9px 0 7px;border-radius:2px;font-size:15.200px}
.gtabs{display:flex;gap:1px;margin:6px 0 0 5px;height:27px;flex:none}
.gt{width:188px;height:27px;background:#3a3a3a;display:flex;align-items:center;padding:0 13px 0 7px;border-radius:3px 3px 0 0;font-size:15px;text-shadow:1px 1px 0 #000}
.gt span{margin:1px 0 0 8px;flex:1}
.gt .cs{font-size:15.500px;line-height:20px}
.gt.act{background:#606060;border-top:1px solid #c9a51c}
.graph{height:677px;flex:none;border:3px solid #606060;border-bottom-width:2px;position:relative}
.canvas{display:block}
.crumbs{position:absolute;left:0;top:0;width:1137px;height:52px;background:rgba(0,0,0,.6);display:flex;align-items:center;color:#7c7c7c;font-size:24px;padding:0 8px 2px 7px}
.crumbs u{width:1px;height:46px;background:#aaa;margin:0 15px 2px 8px}
.ar2{margin-left:30px}
.crumbs .u2{margin:0 13px 2px 18px}
.bp{margin-left:19px;width:181px;letter-spacing:.1px}
.ch{margin:0 11px 0 11px}
.eg{letter-spacing:.6px}
.zoom{margin-left:auto;color:#333;font-weight:700;font-size:24px}
.mark{font:700 82px "Noto Sans CJK KR",sans-serif;fill:#fff;fill-opacity:.19}
.wires path{fill:none;stroke:currentColor;stroke-width:1.700}
.wires .c-wh path{stroke-width:2.600}
.c-nv{color:#0b4aa6}.c-bl{color:#08a0ea}.c-ye{color:#f0b81e}.c-te{color:#1fd3a3}.c-gr{color:#93ee3c}.c-wh{color:#fff}.c-rd{color:#8c0a0a}.c-pu{color:#b36fe0}.c-vi{color:#4d089e}.c-la{color:#9aa6e8}.c-dt{color:#096b5c}
.wires .c-ye{color:#cf9f22}.wires .c-bl{color:#0c8fd2}.wires .c-gr{color:#84cc38}
.pins use{transform:translate(5px,4px)}
.ex use{transform:translate(4px,4px)}
.box rect{fill:url(#body);fill-opacity:.86;stroke:#0a0a0a;stroke-width:1;filter:drop-shadow(0 1px 2px rgba(0,0,0,.7))}
.pills rect{fill:url(#pill);fill-opacity:.9;stroke:#0c0c0c;stroke-width:.8;filter:drop-shadow(0 1px 2px rgba(0,0,0,.7))}
.fi path{fill:none;stroke-width:1.100}
.title text{font:700 6.500px Roboto,"Noto Sans CJK KR",sans-serif;fill:#e2e2e2}
.lb text{font:6px Roboto,"Noto Sans CJK KR",sans-serif;fill:#dadada}
.axis text{font:5.500px Roboto,sans-serif;fill:#777}
.dk{font:6px Roboto,sans-serif;fill:#222}
.sel{font:6px "Noto Sans CJK KR",sans-serif;fill:#aaa}
.inp path{fill:none;stroke:#a8a8a8;stroke-width:.8}
.bubble path{fill:url(#bub)}
.bubble text{font:6.500px Roboto,"Noto Sans CJK KR",sans-serif;fill:#555}

.res{margin-top:6px;height:27px}
.res span{margin-left:9px}
.results{height:149px;background:#606060;padding:3px 3px 2px 2px}
.rin{height:144px;background:#3e3e3e;border-radius:4px;padding:5px 5px 0}
.log{height:95px;background:#222;display:flex;padding:7px 0 0 12px}
.dot{flex:none;width:5px;height:5px;border-radius:50%;background:#6cc0ff;margin:5px 15px 0 0}
.msg{font-size:15.500px;line-height:17px;color:#959595}
.clear{text-align:right;padding:15px 7px 0 0;font-size:15px;color:#eee}

.right{width:476px;margin-left:6px;display:flex;flex-direction:column}
.details{flex:1;background:#606060;margin-bottom:3px}
.det{width:187px}

.taskbar{height:50px;flex:none;background:#000308;display:flex}
.start{width:60px;padding:15px 0 0 20px}
.wsearch{width:430px;background:#333;color:#999;font:18.300px/51px "Open Sans","Noto Sans CJK KR",sans-serif;padding-left:10px}
.app{width:62px;display:flex;align-items:center;justify-content:center}
.tv{width:64px;margin-left:-2px}
.uea{width:57px;margin-left:2px;background:#31353b;border-bottom:3px solid #76b9ed}
.stack{width:4px;margin-right:1px;background:#262a2f;border-bottom:3px solid #5b92c0}
.kakao{width:61px;background:#9a531d;border-bottom:3px solid #ff6d00}
.uea svg,.kakao svg{margin-top:2px}
.kakao svg{margin-right:2px}
.talk{font:700 7px Roboto,sans-serif;fill:#fae100}
.tray{margin-left:auto;display:flex;align-items:center}
.bat{margin:0 9px 0 11px}
.tray svg:nth-child(4){margin:0 14px 0 9px}
.tray svg:nth-child(6){margin:0 18px 0 10px}
.han{width:18px;height:18px;background:#fff;color:#000;font:15px/17px "Noto Sans CJK KR",sans-serif;text-align:center}
.clock{width:76px;margin-left:22px;display:flex;flex-direction:column;align-items:center;gap:5px;font:15px/18px "Open Sans","Noto Sans CJK KR",sans-serif;color:#fff;padding-bottom:3px}
.noti{margin:2px 0 0 21px}
.one1{font:16px Roboto,sans-serif;fill:#fff}
.tray s{width:1px;height:50px;background:#555;margin:0 5px 0 14px}
```
